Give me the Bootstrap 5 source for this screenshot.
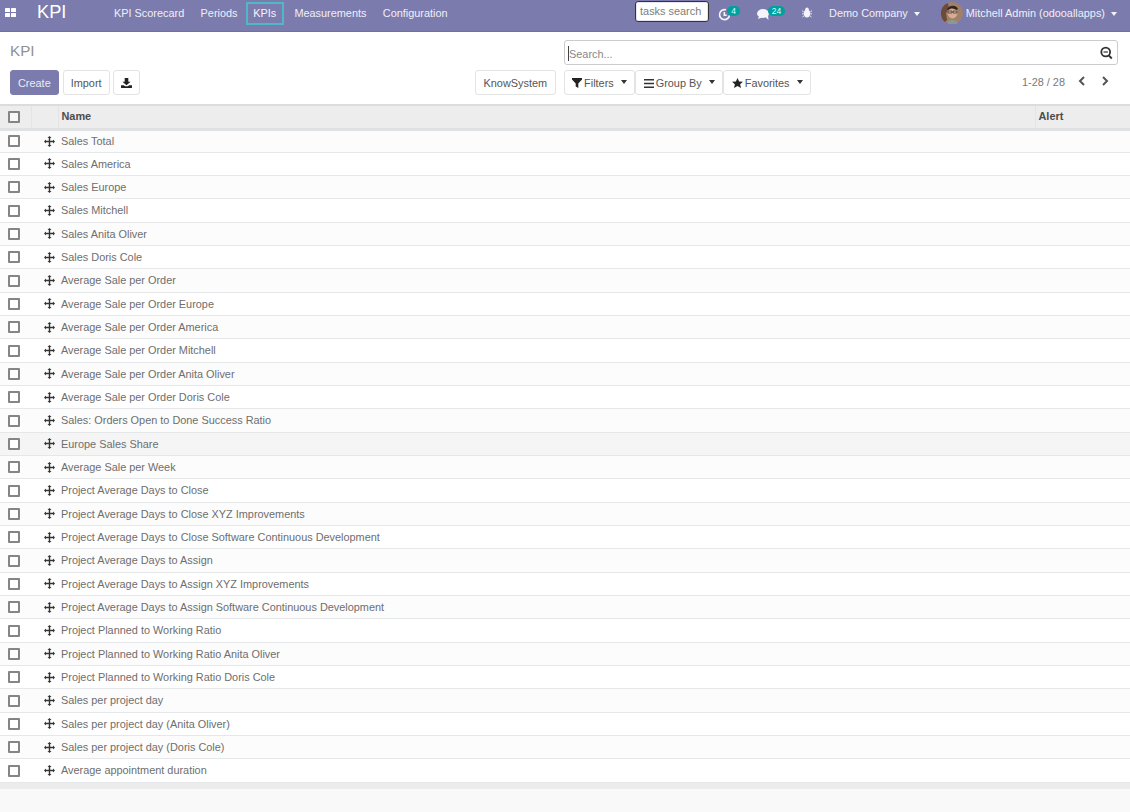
<!DOCTYPE html>
<html lang="en"><head><meta charset="utf-8"><title>KPI</title>
<link href="https://cdn.jsdelivr.net/npm/bootstrap@5.3.0/dist/css/bootstrap.min.css" rel="stylesheet">
<style>
html,body{height:100%}
body{font-family:"Liberation Sans",Arial,sans-serif;font-size:10.9px;color:#666;background:#f9f9f9;overflow:hidden}
.topbar{height:32px;background:#7c7bad;color:#f0eff7;padding:0 0 5px;flex-wrap:nowrap;border-bottom:1px solid #7270a3}
.apps-ic{width:11px;height:11px;margin-left:5px;margin-right:21px;display:block;margin-top:-1px}
.brand-t{font-size:18.2px;color:#fff;width:68.8px;line-height:1;margin-top:-2px}
.menu-i{color:#f0eff7;font-size:10.9px;padding:0 6.2px;line-height:19px;height:23px;text-decoration:none;border:2px solid transparent;display:block;white-space:nowrap}
.menu-i.act{border-color:#4fb8c4;padding:0 5.5px;margin:0 2.5px 0 0;color:#f4f4fa}
.tsearch{width:74px;height:21px;background:#fff;border:1px solid #333;border-radius:3px;font-size:10.9px;color:#7d7d7d;line-height:18px;padding-left:4px;white-space:nowrap;box-shadow:0 0 0 1px #e6e6ee inset;margin-top:-4px;margin-right:9px}
.sys-ic{position:relative;display:block;margin-top:-3px}
.pill{position:absolute;top:0;background:#00a09d;color:#dff;font-size:8.5px;line-height:10px;border-radius:5px;text-align:center;height:10px}
.cpanel{background:#fff;height:72px;padding:8px 12px 0 10px}
.ktitle{font-size:15.2px;color:#909090;line-height:18px;margin-top:2px}
.btnrow{margin-top:10px;gap:4px}
.bbtn{font-size:10.9px;height:25px;line-height:23px;padding:1px 7.5px 0;border:1px solid #e3e3e3;border-radius:3px;background:#fff;color:#555;white-space:nowrap;display:flex;align-items:center;gap:2px}
.bbtn.prim{background:#7c7bad;color:#ececf5;border-color:#7c7bad;padding-left:7px;padding-right:7px}
.bbtn.imp{padding-left:7px;padding-right:7px}
.bbtn.dl{width:27px;justify-content:center;padding:0;margin-left:-1px}
.caret-d{border-top:4px solid #333;border-left:3.500px solid transparent;border-right:3.500px solid transparent;display:inline-block;margin-left:5px;margin-bottom:2px}
.caret-d.lite{border-top-color:#f4f4fa;margin-left:6px;margin-bottom:1px}
.sbox{width:554px;height:25px;border:1px solid #ccc;border-radius:3px;background:#fff;color:#888;padding:1px 0 0 3px;font-size:10.9px;line-height:24px;position:relative}
.cursorb{display:inline-block;width:1px;height:15px;background:#444;vertical-align:-3px}
.sbox svg{position:absolute;right:4px;top:5px}
.kbtable{table-layout:fixed;width:1130px;margin:0;border-collapse:collapse;background:#fff}
.kbtable th{background:#ededed;color:#4c4c4c;font-size:10.9px;height:24px;padding:0 3px 2px;border-top:2px solid #dcdcdc;border-bottom:3px solid #dfe1e2;font-weight:700;vertical-align:middle;border-left:1px solid #e4e4e4}
.kbtable th:first-child{border-left:0}
.kbtable td{height:23.34px;padding:0;border-bottom:1px solid #e6e7e8;color:#6e6e6e;vertical-align:middle;background:#fff;white-space:nowrap;font-size:10.9px}
.kbtable tr.alt td{background:#fcfcfc}
.kbtable tr.hov td{background:#f5f5f5}
.ckb{width:12px;height:12px;border:2px solid #858585;border-radius:1px;background:#fff;display:block;margin-left:8px}
.ckb.hd{margin-left:5px;margin-top:2px;background:#f8f8f8}
.tfoot-s{height:6px;background:#ececec}
.grip{display:block;margin-left:13px}
.kbname{padding-left:3px!important}
</style></head><body>
<nav class="topbar d-flex align-items-center">
<svg class="apps-ic" viewBox="0 0 11 11"><g fill="#fff"><rect x="0" y="1" width="5" height="4" rx=".6"/><rect x="6" y="1" width="5" height="4" rx=".6"/><rect x="0" y="6" width="5" height="4" rx=".6"/><rect x="6" y="6" width="5" height="4" rx=".6"/></g></svg>
<span class="brand-t">KPI</span>
<a class="menu-i" href="#">KPI Scorecard</a><a class="menu-i" href="#">Periods</a><a class="menu-i act" href="#">KPIs</a><a class="menu-i" href="#">Measurements</a><a class="menu-i" href="#">Configuration</a>
<div class="ms-auto d-flex align-items-center">
<div class="tsearch">tasks search</div>
<span class="sys-ic" style="width:22px;height:12px;margin-right:17px"><svg width="13" height="13" viewBox="0 0 13 13" fill="none" stroke="#f4f4fa" stroke-width="1.600"><path d="M11.500 7.500A5 5 0 1 1 8 1.800"/><path d="M6.300 4v3.200h2.400"/></svg><span class="pill" style="left:9px;width:13px">4</span></span>
<span class="sys-ic" style="width:28px;height:12px;margin-right:17px"><svg width="14" height="13" viewBox="0 0 14 13" fill="#f4f4fa"><ellipse cx="6" cy="5.500" rx="6" ry="4.400"/><path d="M2 8l-1 3 4-1.500zM8 8.500l3.500 3.500-.5-4.500z"/></svg><span class="pill" style="left:11px;width:17px">24</span></span>
<svg style="margin-right:17px;margin-top:-1px" width="10" height="11" viewBox="0 0 11 12" fill="#f4f4fa"><ellipse cx="5.500" cy="7" rx="3.400" ry="4.400"/><circle cx="5.500" cy="2.400" r="1.900"/><path d="M0 4l2 1.500M11 4L9 5.500M0 7.500h2M11 7.500H9M.5 11l2-1.500M10.500 11l-2-1.500" stroke="#f4f4fa"/></svg>
<span style="margin-right:21px;white-space:nowrap;color:#f0eff7">Demo Company<i class="caret-d lite"></i></span>
<svg width="22" height="22" viewBox="0 0 22 22" style="margin-right:3px"><circle cx="11" cy="11" r="11" fill="#a08068"/><path d="M0 11a11 11 0 0 1 7-10l1 6-3 4 1 7-2 2a11 11 0 0 1-4-9z" fill="#6d4a3a"/><ellipse cx="11.500" cy="10.500" rx="5" ry="6" fill="#d6ac92"/><path d="M6 8c1-5 9-6 11-1l-1.500 1c-3-2-6-2-8 0z" fill="#33261f"/><path d="M7 9h4v2H7zM12 9h4v2h-4z" fill="none" stroke="#333" stroke-width=".7"/><path d="M6 21c1-4 10-4 11 0a11 11 0 0 1-11 0z" fill="#8a9a92"/></svg>
<span style="margin-right:13px;white-space:nowrap;color:#f0eff7">Mitchell Admin (odooallapps)<i class="caret-d lite"></i></span>
</div>
</nav>
<div class="cpanel d-flex justify-content-between">
<div>
<div class="ktitle">KPI</div>
<div class="btnrow d-flex"><button class="bbtn prim">Create</button><button class="bbtn imp">Import</button><button class="bbtn dl"><svg width="11" height="10" viewBox="0 0 12 11" fill="#222"><path d="M4 0h4v4h2.500L6 8 1.500 4H4z"/><path d="M0 8h3l1.500 1h3L9 8h3v3H0z"/></svg></button></div>
</div>
<div class="d-flex flex-column align-items-start" style="width:643px">
<div class="d-flex justify-content-end w-100"><div class="sbox"><span class="cursorb"></span>Search...<svg width="13" height="14" viewBox="0 0 13 14" fill="none" stroke="#333" stroke-width="1.800"><circle cx="5.700" cy="6" r="4.400"/><path d="M8.800 9.500l3 3"/><path d="M3.500 6h4.400" stroke-width="1.200"/></svg></div></div>
<div class="d-flex align-items-start w-100" style="margin-top:5px">
<button class="bbtn" style="margin-right:8px">KnowSystem</button>
<button class="bbtn"><svg width="10" height="10" viewBox="0 0 10 10" fill="#222"><path d="M0 0h10v1.500L6.300 5.500V10L3.700 8.500v-3L0 1.500z"/></svg>Filters<i class="caret-d"></i></button>
<button class="bbtn"><svg width="10" height="9" viewBox="0 0 10 9" fill="#333"><path d="M0 0h10v1.500H0zM0 3.700h10v1.500H0zM0 7.400h10v1.500H0z"/></svg>Group By<i class="caret-d"></i></button>
<button class="bbtn"><svg width="11" height="10" viewBox="0 0 11 10" fill="#222"><path d="M5.500 0l1.600 3.400 3.900.4-2.900 2.500.9 3.700-3.500-2-3.500 2 .9-3.700L0 3.800l3.900-.4z"/></svg>Favorites<i class="caret-d"></i></button>
<span class="ms-auto d-flex align-items-center" style="height:25px;color:#7a7a7a">1-28 / 28
<svg style="margin-left:13px;margin-top:-4px" width="7" height="10" viewBox="0 0 7 10" fill="none" stroke="#555" stroke-width="2"><path d="M6 1L2 5l4 4"/></svg>
<svg style="margin-left:17px;margin-right:9px;margin-top:-4px" width="7" height="10" viewBox="0 0 7 10" fill="none" stroke="#555" stroke-width="2"><path d="M1 1l4 4-4 4"/></svg></span>
</div>
</div>
</div>
<table class="kbtable"><colgroup><col style="width:31px"><col style="width:27px"><col><col style="width:95px"></colgroup>
<thead><tr><th><span class="ckb hd"></span></th><th></th><th>Name</th><th>Alert</th></tr></thead>
<tbody id="rows"></tbody></table>
<div class="tfoot-s"></div>
<script>
var n=["Sales Total","Sales America","Sales Europe","Sales Mitchell","Sales Anita Oliver","Sales Doris Cole","Average Sale per Order","Average Sale per Order Europe","Average Sale per Order America","Average Sale per Order Mitchell","Average Sale per Order Anita Oliver","Average Sale per Order Doris Cole","Sales: Orders Open to Done Success Ratio","Europe Sales Share","Average Sale per Week","Project Average Days to Close","Project Average Days to Close XYZ Improvements","Project Average Days to Close Software Continuous Development","Project Average Days to Assign","Project Average Days to Assign XYZ Improvements","Project Average Days to Assign Software Continuous Development","Project Planned to Working Ratio","Project Planned to Working Ratio Anita Oliver","Project Planned to Working Ratio Doris Cole","Sales per project day","Sales per project day (Anita Oliver)","Sales per project day (Doris Cole)","Average appointment duration"];
var g='<svg class="grip" width="11" height="11" viewBox="0 0 11 11" fill="#333"><path d="M5.500 0l2 2H6.200v2.800H9V3.500l2 2-2 2V6.200H6.200V9h1.300l-2 2-2-2h1.300V6.200H2v1.300l-2-2 2-2v1.300h2.800V2H3.500z"/></svg>';
document.getElementById('rows').innerHTML=n.map(function(t,i){return '<tr class="'+(i==13?'hov':(i%2==0?'alt':''))+'"><td><span class="ckb"></span></td><td>'+g+'</td><td class="kbname">'+t+'</td><td></td></tr>'}).join('');
</script>
<script src="https://cdn.jsdelivr.net/npm/bootstrap@5.3.0/dist/js/bootstrap.bundle.min.js"></script>
</body></html>
